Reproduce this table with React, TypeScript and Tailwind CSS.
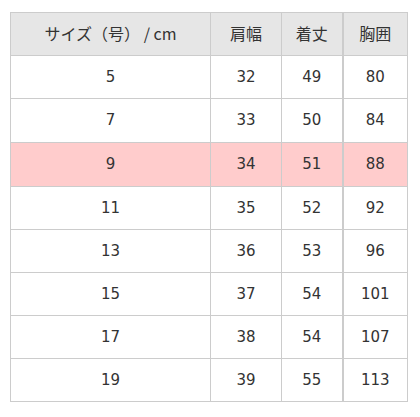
const rows = [
  ["5", "32", "49", "80"],
  ["7", "33", "50", "84"],
  ["9", "34", "51", "88"],
  ["11", "35", "52", "92"],
  ["13", "36", "53", "96"],
  ["15", "37", "54", "101"],
  ["17", "38", "54", "107"],
  ["19", "39", "55", "113"],
];

const heights = ["h-[43px]", "h-[44px]", "h-[44px]", "h-[43px]", "h-[43px]", "h-[43px]", "h-[43px]", "h-[43px]"];

export default function App() {
  return (
    <div className="w-[420px] h-[417px] bg-white pt-[12px] pl-[10px] font-['DejaVu_Sans','Noto_Sans_CJK_JP',sans-serif] text-[15px] text-[#333]">
      <table className="table-fixed border-collapse w-[397px]">
        <colgroup>
          <col className="w-[200px]" />
          <col className="w-[71px]" />
          <col className="w-[61px]" />
          <col className="w-[65px]" />
        </colgroup>
        <thead>
          <tr className="h-[43px] bg-[#e6e6e6] text-[16px] font-['Noto_Sans_CJK_JP',sans-serif]">
            <th className="border border-[#ccc] font-normal text-center pb-[3px]">サイズ（号） / cm</th>
            <th className="border border-[#ccc] font-normal text-center pb-[3px]">肩幅</th>
            <th className="border border-[#ccc] font-normal text-center pb-[3px]">着丈</th>
            <th className="border border-[#ccc] border-l-2 font-normal text-center pb-[3px]">胸囲</th>
          </tr>
        </thead>
        <tbody>
          {rows.map((r, i) => (
            <tr key={r[0]} className={`${heights[i]} ${r[0] === "9" ? "bg-[#ffcccc]" : "bg-white"}`}>
              <td className="border border-[#ccc] text-center">{r[0]}</td>
              <td className="border border-[#ccc] text-center">{r[1]}</td>
              <td className="border border-[#ccc] text-center">{r[2]}</td>
              <td className="border border-[#ccc] border-l-2 text-center">{r[3]}</td>
            </tr>
          ))}
        </tbody>
      </table>
    </div>
  );
}
